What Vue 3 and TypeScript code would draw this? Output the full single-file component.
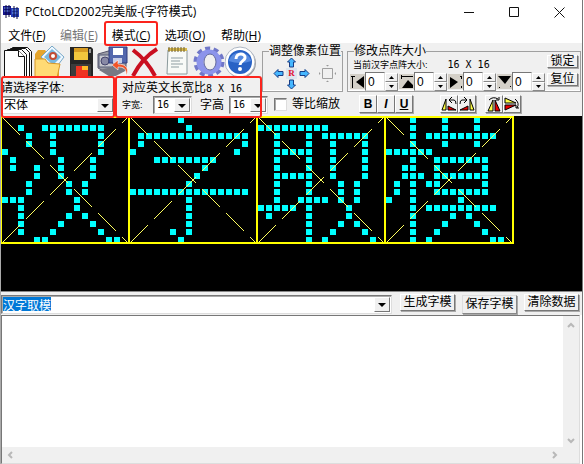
<script setup lang="ts">
import { onMounted, ref } from 'vue'

interface MenuItem { label: string; key: string; disabled?: boolean; marked?: boolean }
interface Glyph { name: string; rows: number[][] }

const menus: MenuItem[] = [
  { label: '文件', key: 'F' },
  { label: '编辑', key: 'E', disabled: true },
  { label: '模式', key: 'C', marked: true },
  { label: '选项', key: 'O' },
  { label: '帮助', key: 'H' },
]

const span = (a: number, b: number): number[] => Array.from({ length: b - a + 1 }, (_, i) => a + i)

const glyphs: Glyph[] = [
  {
    name: '汉',
    rows: [
      [], [2, ...span(5, 12)], [3, 6, 12], [3, 6, 12], [0, 6, 12], [1, 7, 11], [1, 4, 7, 11], [4, 7, 11],
      [3, 8, 10], [3, 8, 10], [0, 1, 2, 9], [2, 9], [2, 8, 10], [2, 7, 11], [2, 6, 12], [4, 5, 13, 14],
    ],
  },
  {
    name: '字',
    rows: [
      [6], [7], span(1, 14), [1, 14], [0, 13], span(3, 10), [9], [8],
      [7], span(0, 14), [7], [7], [7], [7], [5, 7], [6],
    ],
  },
  {
    name: '取',
    rows: [
      [], span(0, 8), [2, 6, ...span(8, 13)], [2, 6, 9, 13], [...span(2, 6), 9, 13], [2, 6, 9, 13], [2, 6, 9, 13], [...span(2, 6), 9, 13],
      [2, 6, 10, 12], [2, 6, 10, 12], [2, ...span(5, 8), 10, 12], [...span(0, 4), 6, 11], [1, 6, 11], [6, 10, 12], [6, 9, 13], [6, 8, 14],
    ],
  },
  {
    name: '模',
    rows: [
      [3, 7, 11], [3, 7, 11], [3, ...span(5, 13)], [3, 7, 11], span(0, 5), [3, ...span(6, 12)], [2, 3, 6, 12], [2, 3, 4, ...span(6, 12)],
      [1, 3, 5, 6, 12], [1, 3, ...span(6, 12)], [0, 3, 9], [3, ...span(5, 13)], [3, 8, 10], [3, 7, 11], [3, 6, 12], [3, 5, 13, 14],
    ],
  },
]

const edges = [
  { name: '左', value: ref(0), path: 'M1 2h4v1H3v11H2V3H1z M14 2v12L6 8z' },
  { name: '上', value: ref(0), path: 'M2 1h1v1h11v1H3v2H2z M3 14L9 6l5 5v3z' },
  { name: '右', value: ref(0), path: 'M2 3l8 5-8 6z M12 2h2v3h-1V3h-1z M13 12h1v2h-1z' },
  { name: '下', value: ref(0), path: 'M1 2h13L8 10z M2 13h1v1H2z M13 12h1v1h-1z' },
]

const font = ref('宋体')
const charWidth = ref('16')
const charHeight = ref('16')
const keepRatio = ref(false)
const text = ref('汉字取模')
const output = ref('')
const textBox = ref<HTMLInputElement | null>(null)

onMounted(() => {
  textBox.value?.focus()
  textBox.value?.select()
})
</script>

<template>
  <div class="window">
    <header class="title-bar">
      <svg class="logo" viewBox="0 0 17 14" aria-hidden="true">
        <path d="M0 1h8v9H0z" fill="#15158c" />
        <path d="M8 3h8v9H8z" fill="#2740b8" />
        <path d="M1 3h6M1 6h6M9 5h6M9 8h6" stroke="#79a6ef" stroke-width="1" />
        <path d="M3 0v13M6 0v12M11 1v12M14 2v12" stroke="#08083c" stroke-width="1" />
      </svg>
      <h1>PCtoLCD2002完美版-(字符模式)</h1>
      <div class="window-buttons">
        <button type="button" aria-label="最小化"><svg viewBox="0 0 11 11"><path d="M0 5.5h10" /></svg></button>
        <button type="button" aria-label="最大化"><svg viewBox="0 0 11 11"><path d="M.5.5h9v9h-9z" /></svg></button>
        <button type="button" aria-label="关闭"><svg viewBox="0 0 11 11"><path d="M.5.5l10 10M10.5.5l-10 10" /></svg></button>
      </div>
    </header>

    <nav class="menu">
      <button v-for="m in menus" :key="m.key" type="button" :disabled="m.disabled" :class="{ marked: m.marked }">{{ m.label }}(<u>{{ m.key }}</u>)</button>
    </nav>

    <section class="toolbar">
      <div class="left">
        <div class="icons">
          <button type="button" aria-label="新建">
            <svg viewBox="0 0 32 32">
              <g fill="#fff" stroke="#111" stroke-width="1">
                <path d="M11.500 1.500h15l4 4v27h-19z" /><path d="M9.500 2.500h15l4 4v27h-19z" /><path d="M6.500 3.500h14l5 5v27h-19z" /><path d="M3.500 4.500h14l6 6v26h-20z" /><path d="M17.500 4.500v6h6" />
              </g>
            </svg>
          </button>
          <button type="button" aria-label="打开">
            <svg viewBox="0 0 32 32">
              <path d="M2 8l3-4h7l2 3h12v25H2z" fill="#e5a52d" />
              <path d="M8 11L19 0l12 11-9 12z" fill="#eef7ff" stroke="#76a7c6" />
              <path d="M11 11l8-8 9 8-8 8z" fill="#78b9df" />
              <circle cx="20" cy="10" r="3" fill="#fff" stroke="#c24c34" stroke-width="2" />
              <path d="M2 13h10l3 4 12 1-3 14H2z" fill="#ffda74" stroke="#d79624" />
            </svg>
          </button>
          <button type="button" aria-label="保存">
            <svg viewBox="0 0 32 32">
              <path d="M5 1h21l2 2v29H5z" fill="#252525" /><path d="M9 2h14v12H9z" fill="#f2c63d" /><path d="M9 2h14v4H9z" fill="#d79b22" />
              <path d="M6 18h20v12H6z" fill="#3c3c3c" /><path d="M11 20h12v11H11z" fill="#ed3422" /><path d="M17 20h6v4h-6z" fill="#ffbc27" /><path d="M24 3h2v4h-2z" fill="#999" />
            </svg>
          </button>
          <button type="button" aria-label="另存为">
            <svg viewBox="0 0 32 32">
              <path d="M1 8l14-4 14 9v11l-15 5L1 22z" fill="#9b9ca5" stroke="#55556a" />
              <path d="M2 9h14v12H2z" fill="#c7c8ce" stroke="#555b77" /><circle cx="8" cy="15" r="4" fill="#8889a5" stroke="#44446b" />
              <path d="M12 1h18v16H12z" fill="#5367ad" stroke="#303d7c" /><path d="M16 2h10v7H16z" fill="#fff" /><path d="M16 12h9v5h-9z" fill="#c7cde7" />
              <path d="M2 24l18-4 10 4-15 8z" fill="#777984" /><path d="M29 30c1-8-3-9-8-9v3l-6-5 6-5v4c8 0 12 5 8 12z" fill="#f15327" stroke="#fff" stroke-width=".6" />
            </svg>
          </button>
          <button type="button" aria-label="删除">
            <svg viewBox="0 0 32 32"><path d="M4 4c8 6 16 14 22 26M28 3C18 9 10 18 4 30" fill="none" stroke="#c90f20" stroke-width="4" /></svg>
          </button>
          <button type="button" aria-label="记事本">
            <svg viewBox="0 0 32 32">
              <path d="M7 4h19v24H6z" fill="#f8faf7" stroke="#8a999b" /><path d="M7 2h19v3H7z" fill="#d7b94a" />
              <path d="M8 1v5M11 1v5M14 1v5M17 1v5M20 1v5M23 1v5" stroke="#6d5d2f" /><path d="M10 12h12M10 15h9M10 18h12M10 21h8" stroke="#8e9da1" />
            </svg>
          </button>
          <button type="button" aria-label="设置">
            <svg viewBox="0 0 32 32">
              <circle cx="16" cy="16" r="13" fill="none" stroke="#7077c8" stroke-width="5" stroke-dasharray="4.800 3.368" />
              <circle cx="16" cy="16" r="9" fill="none" stroke="#8c94eb" stroke-width="7" /><ellipse cx="17" cy="16" rx="6" ry="8" fill="#f0f0f0" stroke="#62699c" />
            </svg>
          </button>
          <button type="button" aria-label="帮助">
            <svg viewBox="0 0 32 32">
              <circle cx="16" cy="17" r="15" fill="#999b9f" /><circle cx="15" cy="16" r="15" fill="#fff" stroke="#adb6c3" /><circle cx="15" cy="16" r="12" fill="#2862c5" />
              <path d="M3.500 15a12 12 0 0 1 23 0q-11 4-23 0z" fill="#568ae0" /><path d="M11 13c0-7 10-6 9-1-.5 3-5 3-5 7" fill="none" stroke="#fff" stroke-width="3" /><circle cx="15" cy="23" r="2" fill="#fff" />
            </svg>
          </button>
        </div>
        <div class="panels">
          <div class="panel font-panel">
            <label for="font">请选择字体:</label>
            <div class="combo">
              <select id="font" v-model="font"><option>宋体</option></select><span class="drop" />
            </div>
          </div>
          <div class="panel size-panel">
            <div class="ratio">对应英文长宽比<span class="mono">8 X 16</span></div>
            <div class="sizes">
              <label class="tiny" for="cw">字宽:</label>
              <div class="combo small"><select id="cw" v-model="charWidth"><option>16</option></select><span class="drop" /></div>
              <label for="ch">字高</label>
              <div class="combo small"><select id="ch" v-model="charHeight"><option>16</option></select><span class="drop" /></div>
            </div>
          </div>
        </div>
      </div>

      <div class="right">
        <div class="groups">
          <fieldset class="shift">
            <legend>调整像素位置</legend>
            <div class="shift-body">
              <div class="pad">
                <button class="up" type="button" aria-label="上移"><svg viewBox="0 0 11 11"><path d="M5.500 1l4 4h-2v5h-4V5h-2z" /></svg></button>
                <button class="lt" type="button" aria-label="左移"><svg viewBox="0 0 11 11"><path d="M1 5.500l4-4v2h5v4H5v2z" /></svg></button>
                <button class="reset" type="button">R</button>
                <button class="rt" type="button" aria-label="右移"><svg viewBox="0 0 11 11"><path d="M10 5.500l-4-4v2H1v4h5v2z" /></svg></button>
                <button class="dn" type="button" aria-label="下移"><svg viewBox="0 0 11 11"><path d="M5.500 10l4-4h-2V1h-4v5h-2z" /></svg></button>
              </div>
              <svg class="frame" viewBox="0 0 19 19" aria-hidden="true">
                <path d="M4.500 4.500h10v10h-10z" fill="none" stroke="#a0a0a0" /><path d="M8 1h3L9.500 2.500zM8 18h3l-1.500-1.500zM1 8v3l1.500-1.500zM18 8v3l-1.500-1.500z" fill="#999" />
              </svg>
            </div>
          </fieldset>
          <fieldset class="matrix">
            <legend>修改点阵大小</legend>
            <div class="matrix-body">
              <div class="matrix-main">
                <div class="current"><span class="tiny">当前汉字点阵大小:</span><span class="mono">16 X 16</span></div>
                <div class="spins">
                  <div v-for="e in edges" :key="e.name" class="spin">
                    <svg viewBox="0 0 15 15" aria-hidden="true"><path :d="e.path" /></svg>
                    <input v-model="e.value.value" type="text" :aria-label="e.name">
                    <div class="steps">
                      <button type="button" aria-label="增加" @click="e.value.value++"><svg viewBox="0 0 5 3"><path d="M0 3h5L2.500 0z" /></svg></button>
                      <button type="button" aria-label="减少" @click="e.value.value--"><svg viewBox="0 0 5 3"><path d="M0 0h5L2.500 3z" /></svg></button>
                    </div>
                  </div>
                </div>
              </div>
              <div class="locks">
                <button class="raised" type="button">锁定</button>
                <button class="raised" type="button">复位</button>
              </div>
            </div>
          </fieldset>
        </div>
        <div class="options">
          <label class="check"><input v-model="keepRatio" type="checkbox"><span>等比缩放</span></label>
          <div class="styles">
            <button class="raised" type="button"><b>B</b></button>
            <button class="raised" type="button"><b><i>I</i></b></button>
            <button class="raised" type="button"><b><u>U</u></b></button>
          </div>
          <div class="styles turn">
            <button class="raised" type="button" aria-label="左旋转">
              <svg viewBox="0 0 16 16"><path d="M1 14L5 3v11z" fill="#ff4" stroke="#000" /><path d="M7 14v-4l8 4z" fill="#e00" stroke="#000" /><path d="M9 4h4q2 0 2 4M11 1L8 4l3 3" fill="none" stroke="#000" /></svg>
            </button>
            <button class="raised" type="button" aria-label="右旋转">
              <svg viewBox="0 0 16 16"><path d="M15 14L11 3v11z" fill="#ff4" stroke="#000" /><path d="M9 14v-4l-8 4z" fill="#e00" stroke="#000" /><path d="M7 4H3Q1 4 1 8M5 1l3 3-3 3" fill="none" stroke="#000" /></svg>
            </button>
          </div>
          <div class="styles">
            <button class="raised" type="button" aria-label="水平翻转">
              <svg viewBox="0 0 16 16"><path d="M2 15L7 4v11z" fill="#ff4" stroke="#000" /><path d="M9 15V4l5 11z" fill="#e00" stroke="#000" /><path d="M3 4q4-4 9-1M10 4h3V1" fill="none" stroke="#000" /></svg>
            </button>
            <button class="raised" type="button" aria-label="垂直翻转">
              <svg viewBox="0 0 16 16"><path d="M1 2l11 5H1z" fill="#ff4" stroke="#000" /><path d="M1 9h11L1 14z" fill="#e00" stroke="#000" /><path d="M11 3q5 4 2 9M12 9v3h3" fill="none" stroke="#000" /></svg>
            </button>
          </div>
        </div>
      </div>
    </section>

    <main class="canvas">
      <svg v-for="g in glyphs" :key="g.name" class="glyph" viewBox="0 0 128 128" role="img" :aria-label="g.name" shape-rendering="crispEdges">
        <template v-for="(row, y) in g.rows" :key="y">
          <rect v-for="x in row" :key="x" :x="x * 8 + 1" :y="y * 8 + 1" width="6" height="6" fill="#0ff" />
        </template>
        <path d="M1 1L127 127" pathLength="126" class="diagonal" />
        <path d="M1 127L127 1" pathLength="126" class="diagonal" />
        <path d="M0 1h129M0 127h129M128 0v128M0 0v128" stroke="#ff0" stroke-width="2" />
      </svg>
    </main>

    <section class="entry">
      <div class="combo text-combo">
        <input ref="textBox" v-model="text" type="text" aria-label="文字">
        <button class="drop" type="button" aria-label="展开" />
      </div>
      <div class="actions">
        <button class="raised" type="button">生成字模</button>
        <button class="raised focus" type="button">保存字模</button>
        <button class="raised" type="button">清除数据</button>
      </div>
    </section>

    <section class="output">
      <textarea v-model="output" aria-label="输出" />
      <div class="bar vertical" aria-hidden="true">
        <svg viewBox="0 0 8 6"><path d="M1 5l3-3 3 3" /></svg>
        <svg viewBox="0 0 8 6"><path d="M1 1l3 3 3-3" /></svg>
      </div>
      <div class="bar horizontal" aria-hidden="true">
        <svg viewBox="0 0 6 8"><path d="M5 1L2 4l3 3" /></svg>
        <svg viewBox="0 0 6 8"><path d="M1 1l3 3-3 3" /></svg>
      </div>
    </section>
  </div>
</template>

<style>
body { background: #fff; }
</style>

<style scoped>
* { box-sizing: border-box; }
.window {
  min-height: 100vh; display: flex; flex-direction: column; margin-right: 1px;
  border-right: 1px solid #777; border-left: 1px solid #aaa; background: #fff; color: #000;
  font: 12px/12px "Liberation Sans", "Noto Sans CJK SC", sans-serif;
}
button, input, select, textarea { font: inherit; color: inherit; padding: 0; margin: 0; border: 0; border-radius: 0; background: none; outline: 0; }
svg { display: block; }
.title-bar { display: flex; align-items: center; height: 24px; padding-left: 2px; font-family: "Open Sans", "Noto Sans CJK SC", sans-serif; }
.logo { width: 17px; height: 14px; margin-right: 5px; }
h1 { margin: 0; flex: 1; font-size: 12px; font-weight: 400; line-height: 16px; white-space: nowrap; }
.window-buttons { display: flex; }
.window-buttons button { width: 45px; height: 24px; display: grid; place-items: center; }
.window-buttons svg { width: 11px; height: 11px; fill: none; stroke: #111; }
.menu { display: flex; height: 19px; font-family: "Open Sans", "Noto Sans CJK SC", sans-serif; }
.menu button { position: relative; width: 52px; padding-top: 2px; line-height: 20px; white-space: nowrap; }
.menu button:nth-child(n + 4) { width: 56px; }
.menu button:disabled { color: #777; }
.marked::after, .panel::after { content: ""; position: absolute; z-index: 2; border: 2px solid #fb241d; border-radius: 3px; pointer-events: none; }
.marked::after { inset: -3px -1px; }
.toolbar { display: flex; height: 73px; background: #f0f0f0; }
.left { width: 261px; flex: none; }
.icons { display: flex; height: 33px; padding-top: 3px; overflow: hidden; }
.icons button { width: 32px; height: 32px; flex: none; }
.icons svg { width: 32px; height: 32px; }
.panels { display: flex; height: 40px; }
.panel { position: relative; flex: none; padding-top: 6px; white-space: nowrap; }
.panel::after { inset: 0 0 -2px; }
.font-panel { width: 114px; }
.font-panel label { display: block; height: 14px; }
.size-panel { width: 147px; padding-left: 7px; }
.ratio { height: 14px; }
.mono { font-family: "DejaVu Sans Mono", monospace; font-size: 10px; }
.tiny { font-size: 9px; }
.sizes { display: flex; align-items: center; }
.sizes label { flex: none; }
.sizes .tiny { width: 31px; }
.combo { position: relative; display: flex; height: 18px; background: #fff; border: 1px solid; border-color: #777 #ddd #ddd #777; box-shadow: inset 1px 1px #aaa; }
.combo select { appearance: none; width: 100%; padding-left: 2px; }
.combo.small { width: 39px; flex: none; }
.combo.small + label { margin: 0 5px 0 8px; }
.small select { font-family: "DejaVu Sans Mono", monospace; font-size: 10px; padding-left: 3px; }
.drop { position: absolute; right: 1px; top: 1px; bottom: 1px; width: 16px; background: #f0f0f0; border: 1px solid; border-color: #fff #777 #777 #fff; pointer-events: none; }
.drop::after { content: ""; position: absolute; left: 3px; top: 5px; border: 4px solid transparent; border-top-color: #000; border-bottom: 0; }
.right { flex: 1; min-width: 0; }
.groups { display: flex; gap: 4px; height: 49px; padding: 2px 1px 0 0; }
fieldset { margin: 0; padding: 0; height: 47px; min-width: 0; border: 1px solid #a0a0a0; box-shadow: inset 0 -1px #fff; }
legend { margin-left: 6px; padding: 0; height: 12px; white-space: nowrap; }
.shift { width: 81px; flex: none; }
.shift-body { display: flex; align-items: center; gap: 8px; padding-left: 10px; }
.pad { display: grid; grid-template: repeat(3, 11px) / repeat(3, 11px); gap: 0 2px; }
.pad button, .pad svg { width: 11px; height: 11px; }
.pad path { fill: #45b7ff; stroke: #173d86; }
.up, .dn { grid-column: 2; }
.lt { grid-area: 2 / 1; }
.reset { grid-area: 2 / 2; font: bold 9px/11px "Liberation Serif", serif; color: #e01030; background: #dce5ee; }
.rt { grid-area: 2 / 3; }
.frame { width: 19px; height: 19px; }
.matrix { flex: 1; }
.matrix-body { display: flex; justify-content: space-between; }
.matrix-main { padding-left: 2px; }
.current { display: flex; align-items: center; gap: 20px; padding-left: 3px; height: 15px; white-space: nowrap; }
.spins { display: flex; gap: 1px; }
.spin { display: flex; width: 48px; height: 19px; align-items: center; }
.spin > svg { width: 15px; height: 15px; background: #d4d0c8; }
.spin input { width: 20px; height: 19px; padding-left: 2px; background: #fff; border: 1px solid; border-color: #777 #ddd #ddd #777; }
.steps { width: 13px; }
.steps button { display: grid; place-items: center; width: 13px; height: 9px; border: 1px solid; border-color: #fff #888 #888 #fff; }
.steps svg { width: 5px; height: 3px; }
.locks { display: flex; flex-direction: column; gap: 5px; width: 31px; margin: -2px 2px 0 0; flex: none; }
.raised { background: #f0f0f0; border: 1px solid; border-color: #fff #777 #777 #fff; box-shadow: 1px 1px #aaa; white-space: nowrap; }
.locks button { height: 13px; line-height: 11px; }
.options { display: flex; align-items: center; height: 24px; padding-left: 12px; }
.check { display: flex; align-items: center; gap: 5px; width: 85px; }
.check input { appearance: none; width: 13px; height: 13px; background: #fff; border: 1px solid; border-color: #777 #ddd #ddd #777; box-shadow: inset 1px 1px #aaa; }
.styles { display: flex; margin-right: 9px; }
.styles button { width: 18px; height: 18px; }
.styles svg { width: 16px; height: 16px; }
.styles.turn { margin-left: 18px; }
.canvas { display: flex; height: 175px; flex: none; background: #000; overflow: hidden; }
.glyph { width: 128px; height: 128px; overflow: visible; flex: none; }
.diagonal { fill: none; stroke: #ffff60; stroke-width: 1; stroke-dasharray: 18 6; }
.entry { display: flex; height: 24px; flex: none; padding: 3px 3px 0 0; background: #f0f0f0; border-top: 1px solid #888; }
.text-combo { flex: 1; height: 19px; }
.text-combo input { flex: 1; min-width: 0; height: 14px; margin-top: 1px; padding-left: 1px; line-height: 13px; }
.text-combo input::selection { background: #0078d7; color: #fff; }
.actions { display: flex; gap: 7px; margin-left: 8px; }
.actions button { width: 55px; height: 17px; line-height: 15px; margin-top: -1px; }
.actions .focus { height: 19px; margin-top: 0; border-color: #ddd #888 #888 #ddd; }
.output { flex: 1; display: grid; grid-template: 1fr 16px / 1fr 16px; margin-right: 2px; background: #f0f0f0; border: 1px solid #ddd; border-top-color: #777; border-left-color: #777; }
textarea { resize: none; width: 100%; height: 100%; background: #fff; line-height: 14px; }
.bar { display: flex; justify-content: space-between; align-items: center; }
.bar svg { fill: none; stroke: #b8b8b8; stroke-width: 2; }
.vertical { flex-direction: column; padding: 6px 0 3px; }
.vertical svg { width: 8px; height: 6px; }
.horizontal { padding: 0 5px; }
.horizontal svg { width: 6px; height: 8px; }
</style>
